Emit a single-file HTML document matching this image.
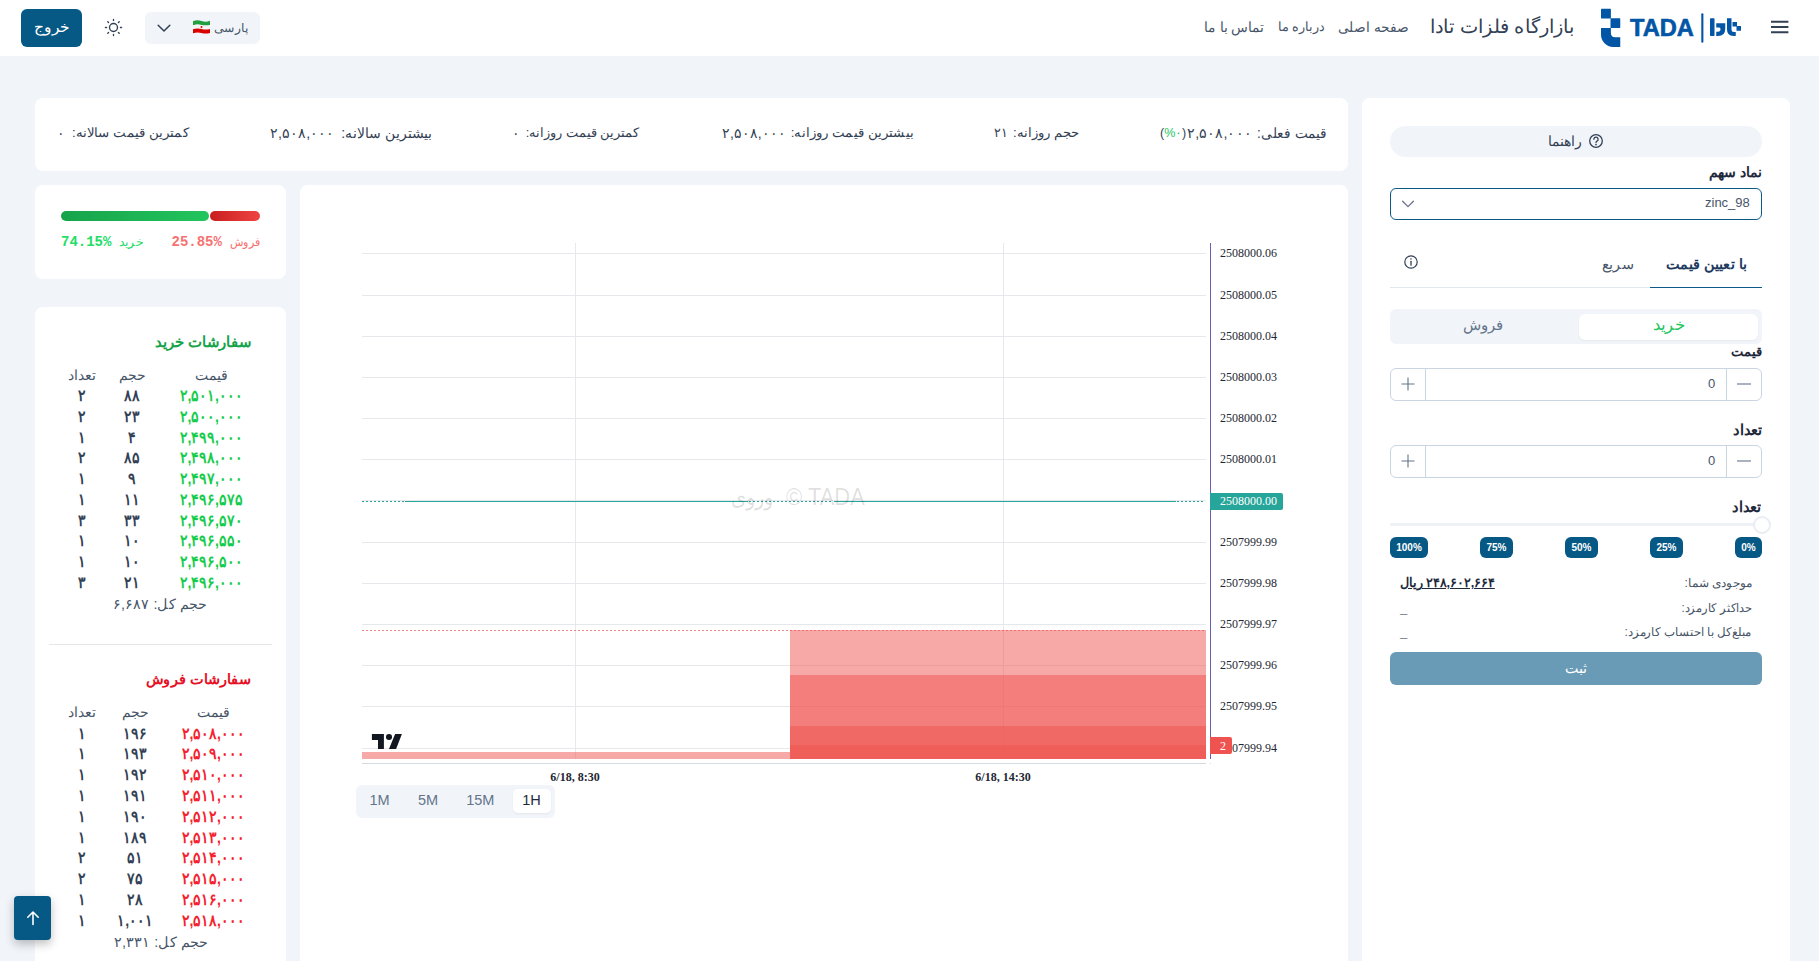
<!DOCTYPE html>
<html lang="fa">
<head>
<meta charset="utf-8">
<title>بازارگاه فلزات تادا</title>
<style>
*{box-sizing:border-box;margin:0;padding:0}
html,body{width:1819px;height:961px;overflow:hidden}
body{position:relative;background:#f1f5f9;font-family:"Liberation Sans",sans-serif;color:#334155;font-size:14px;line-height:1}
.abs{position:absolute}
.t{position:absolute;white-space:nowrap;line-height:20px;height:20px;direction:rtl}
.r{text-align:right}
.c{text-align:center}
.card{position:absolute;background:#fff;border-radius:8px}
.b{font-weight:bold}
/* header */
#hdr{position:absolute;left:0;top:0;width:1819px;height:56px;background:#fff}
.nav{color:#475569;font-size:13.5px}
/* stats */
.st{font-size:14px;color:#334155;top:123px}
/* order book */
.ob{font-size:14px}
.ob .h{color:#475569}
.n{font-size:16px;transform:scaleX(.875)}
.g{color:#14cc4b}
.rd{color:#f5222d}
/* chart */
.ax{position:absolute;font-family:"Liberation Serif",serif;font-size:12px;color:#1f2733;line-height:14px;height:14px;white-space:nowrap}
.gl{position:absolute;background:#e6e8ec;height:1px;left:362px;width:844px}
.vl{position:absolute;background:#e6e8ec;width:1px;top:243px;height:516px}
</style>
</head>
<body>

<!-- ================= HEADER ================= -->
<div id="hdr">
  
  <!-- hamburger -->
  <svg class="abs" style="left:1768px;top:16px" width="24" height="24" viewBox="0 0 24 24"><path d="M3 5.8H20.4M3 11H20.4M3 16.2H20.4" stroke="#334155" stroke-width="1.9" fill="none"/></svg>
  <!-- logo -->
  <svg class="abs" style="left:1595px;top:4px" width="160" height="48" viewBox="0 0 160 48">
    <g fill="#0355a5">
      <rect x="6" y="4.8" width="9.9" height="9.7" rx="0.4"/>
      <rect x="15.5" y="14.25" width="9.75" height="9.75" rx="0.4"/>
      <path d="M6,24 H15.9 V29 Q15.9,33.25 20.2,33.25 H25.25 V43 H18 A12,12.5 0 0 1 6,30.5 Z"/>
      <text x="35.1" y="32" font-family="Liberation Sans, sans-serif" font-weight="bold" font-size="23" stroke="#0355a5" stroke-width="0.6" textLength="63.8" lengthAdjust="spacingAndGlyphs">TADA</text>
      <rect x="106.3" y="9.25" width="2.1" height="29.5" rx="1"/>
      <g transform="translate(95,0)">
        <rect x="20" y="14.25" width="4.5" height="17.75" rx="0.7"/>
        <path d="M26.25,19.25 H35.25 V24.5 Q35.25,32 28,32 H26.25 V27.75 H28 Q30.5,27.75 30.5,25 Q30.5,23.5 29.3,23.5 H26.25 Z"/>
        <path d="M37,14.25 H41.5 V25.5 Q41.5,28 44,28 H45.75 V32 H43.5 Q37,32 37,25.5 Z"/>
        <rect x="42.5" y="18" width="4.5" height="4.5"/>
        <rect x="46.5" y="22" width="4.5" height="4.75"/>
      </g>
    </g>
  </svg>
  <div class="t r" id="ttl" style="right:244.0px;top:14px;font-size:19px;line-height:26px;height:26px;color:#334155;transform:scaleX(1.021);transform-origin:right">بازارگاه فلزات تادا</div>
  <div class="t r nav" id="n1" style="right:410.0px;top:17px;font-size:14px;transform:scaleX(0.979);transform-origin:right">صفحه اصلی</div>
  <div class="t r nav" id="n2" style="right:494.0px;top:17px;font-size:13px;transform:scaleX(0.979);transform-origin:right">درباره ما</div>
  <div class="t r nav" id="n3" style="right:555.0px;top:17px;font-size:14px;transform:scaleX(0.983);transform-origin:right">تماس با ما</div>
  <!-- language -->
  <div class="abs" style="left:145px;top:12px;width:115px;height:32px;background:#f1f5f9;border-radius:6px"></div>
  <div class="t r" id="lang" style="left:214.0px;width:34px;top:18px;font-size:12px;color:#475569;transform:scaleX(1.030);transform-origin:right">پارسی</div>
  <svg class="abs" style="left:193px;top:20px" width="17" height="14" viewBox="0 0 17 14"><path d="M0,1.2 Q4,-0.6 8.5,1 T17,0.8 V5 Q12.5,6 8.5,5 T0,5.2 Z" fill="#239f40"/><path d="M0,5.2 Q4,4 8.5,5 T17,5 V9 Q12.5,10 8.5,9 T0,9.2 Z" fill="#f5f5f5"/><path d="M0,9.2 Q4,8 8.5,9 T17,9 V13 Q12.5,14.2 8.5,13 T0,13.2 Z" fill="#da0000"/><circle cx="8.5" cy="7" r="1" fill="#da0000"/></svg>
  <svg class="abs" style="left:156px;top:20px" width="16" height="16" viewBox="0 0 16 16"><path d="M2.2,5.2 L8,11 L13.8,5.2" stroke="#334155" stroke-width="1.5" fill="none" stroke-linecap="round" stroke-linejoin="round"/></svg>
  <!-- sun -->
  <svg class="abs" style="left:104px;top:18px" width="19" height="19" viewBox="0 0 21 21"><g stroke="#334155" stroke-width="1.5" fill="none" stroke-linecap="round"><circle cx="10.5" cy="10.5" r="4.4"/><path d="M10.5,1.6v1.2M10.5,18.2v1.2M1.6,10.5h1.2M18.2,10.5h1.2M4.2,4.2l.85,.85M15.95,15.95l.85,.85M4.2,16.8l.85,-.85M15.95,5.05l.85,-.85"/></g></svg>
  <!-- exit -->
  <div class="abs" style="left:21px;top:9px;width:61px;height:38px;background:#075985;border-radius:6px"></div>
  <div class="t c" id="exit" style="left:21.0px;width:61px;top:17px;font-size:15px;color:#fff;transform:scaleX(1.030);transform-origin:center">خروج</div>

</div>

<!-- ================= STATS CARD ================= -->
<div class="card" style="left:35px;top:98px;width:1313px;height:73px"></div>

<div class="t r st" id="s1l" style="right:492.2px;font-size:14px;transform:scaleX(0.971);transform-origin:right">قیمت فعلی:</div><div class="t st" id="s1v" style="left:1187.4px;font-size:14px;transform:scaleX(1.017);transform-origin:left">۲,۵۰۸,۰۰۰</div><div class="t st" id="s1p" style="left:1160.2px;font-size:13px;transform:scaleX(0.963);transform-origin:left">(<span style="color:#22c55e">%۰</span>)</div>
<div class="t r st" id="s2l" style="right:739.4px;font-size:13px;transform:scaleX(1.017);transform-origin:right">حجم روزانه:</div><div class="t st" id="s2v" style="left:994.0px;font-size:13px;transform:scaleX(0.967);transform-origin:left">۲۱</div>
<div class="t r st" id="s3l" style="right:905.2px;font-size:13px;transform:scaleX(1.027);transform-origin:right">بیشترین قیمت روزانه:</div><div class="t st" id="s3v" style="left:721.8px;font-size:14px;transform:scaleX(0.995);transform-origin:left">۲,۵۰۸,۰۰۰</div>
<div class="t r st" id="s4l" style="right:1180.6px;font-size:13px;transform:scaleX(0.994);transform-origin:right">کمترین قیمت روزانه:</div><div class="t st" id="s4v" style="left:511.5px">۰</div>
<div class="t r st" id="s5l" style="right:1387.6px;font-size:14px;transform:scaleX(0.997);transform-origin:right">بیشترین سالانه:</div><div class="t st" id="s5v" style="left:270.2px;font-size:14px;transform:scaleX(1.012);transform-origin:left">۲,۵۰۸,۰۰۰</div>
<div class="t r st" id="s6l" style="right:1630.6px;font-size:13px;transform:scaleX(1.027);transform-origin:right">کمترین قیمت سالانه:</div><div class="t st" id="s6v" style="left:57.2px">۰</div>

<!-- ================= RIGHT PANEL ================= -->
<div class="card" style="left:1362px;top:98px;width:428px;height:900px"></div>

<!-- help pill -->
<div class="abs" style="left:1390px;top:126px;width:372px;height:31px;background:#f1f5f9;border-radius:16px"></div>
<svg class="abs" style="left:1588px;top:133px" width="16" height="16" viewBox="0 0 16 16"><circle cx="8" cy="8" r="6.3" stroke="#334155" stroke-width="1.3" fill="none"/><path d="M5.9,6.3a2.1,2.1 0 1 1 3,1.9c-.6,.35-.9,.7-.9,1.4" stroke="#334155" stroke-width="1.3" fill="none" stroke-linecap="round"/><circle cx="8" cy="11.6" r=".85" fill="#334155"/></svg>
<div class="t r" id="help" style="right:237.0px;top:131px;font-size:14px;color:#334155;transform:scaleX(1.000);transform-origin:right">راهنما</div>
<!-- symbol -->
<div class="t r b" id="l1" style="right:57.0px;top:162px;font-size:14px;color:#1e293b;transform:scaleX(1.000);transform-origin:right">نماد سهم</div>
<div class="abs" style="left:1390px;top:188px;width:372px;height:32px;border:1.5px solid #0b5a87;border-radius:6px;background:#fff"></div>
<div class="t" id="sym" style="direction:ltr;left:1705px;top:193px;font-size:13px;color:#475569">zinc_98</div>
<svg class="abs" style="left:1400px;top:196px" width="16" height="16" viewBox="0 0 16 16"><path d="M2.6,5.3 L8,10.6 L13.4,5.3" stroke="#64748b" stroke-width="1.3" fill="none" stroke-linecap="round" stroke-linejoin="round"/></svg>
<!-- tabs -->
<div class="abs" style="left:1390px;top:287px;width:372px;height:1px;background:#e2e8f0"></div>
<div class="abs" style="left:1650px;top:286.5px;width:112px;height:1.6px;background:#0b5a87"></div>
<div class="t r b" id="tab1" style="right:72.5px;top:254px;font-size:14px;color:#1e3a5f;transform:scaleX(1.024);transform-origin:right">با تعیین قیمت</div>
<div class="t r" id="tab2" style="right:185.0px;top:254px;font-size:14px;color:#475569;transform:scaleX(1.033);transform-origin:right">سریع</div>
<svg class="abs" style="left:1403px;top:254px" width="16" height="16" viewBox="0 0 16 16"><circle cx="8" cy="8" r="6.2" stroke="#334155" stroke-width="1.2" fill="none"/><path d="M8,7.3V11.2" stroke="#334155" stroke-width="1.3" stroke-linecap="round"/><circle cx="8" cy="5" r=".8" fill="#334155"/></svg>
<!-- buy/sell toggle -->
<div class="abs" style="left:1390px;top:309px;width:372px;height:35px;background:#f1f5f9;border-radius:6px"></div>
<div class="abs" style="left:1579px;top:314px;width:179px;height:26px;background:#fff;border-radius:6px;box-shadow:0 1px 2px rgba(0,0,0,.05)"></div>
<div class="t c" id="buy" style="left:1638.7px;width:60px;top:315px;font-size:16px;color:#22c55e;transform:scaleX(1.047);transform-origin:center">خرید</div>
<div class="t c" id="sell" style="left:1452.5px;width:60px;top:315px;font-size:15px;color:#64748b;transform:scaleX(0.998);transform-origin:center">فروش</div>
<!-- price -->
<div class="t r b" id="l2" style="right:57.0px;top:342px;font-size:13px;color:#1e293b;transform:scaleX(1.000);transform-origin:right">قیمت</div>
<div class="abs" style="left:1390px;top:368px;width:372px;height:33px;border:1px solid #cbd5e1;border-radius:6px;background:#fff"></div>
<div class="abs" style="left:1425px;top:368px;width:1px;height:33px;background:#cbd5e1"></div><div class="abs" style="left:1726px;top:368px;width:1px;height:33px;background:#cbd5e1"></div>
<svg class="abs" style="left:1400px;top:376px" width="16" height="16" viewBox="0 0 16 16"><path d="M8,1.5V14.5M1.5,8H14.5" stroke="#64748b" stroke-width="1.1"/></svg>
<svg class="abs" style="left:1736px;top:376px" width="16" height="16" viewBox="0 0 16 16"><path d="M1,8H15" stroke="#64748b" stroke-width="1.1"/></svg>
<div class="t" style="direction:ltr;left:1708px;top:374px;font-size:13px;color:#475569">0</div>
<!-- qty -->
<div class="t r b" id="l3" style="right:57.0px;top:420px;font-size:15px;color:#1e293b;transform:scaleX(0.968);transform-origin:right">تعداد</div>
<div class="abs" style="left:1390px;top:445px;width:372px;height:33px;border:1px solid #cbd5e1;border-radius:6px;background:#fff"></div>
<div class="abs" style="left:1425px;top:445px;width:1px;height:33px;background:#cbd5e1"></div><div class="abs" style="left:1726px;top:445px;width:1px;height:33px;background:#cbd5e1"></div>
<svg class="abs" style="left:1400px;top:453px" width="16" height="16" viewBox="0 0 16 16"><path d="M8,1.5V14.5M1.5,8H14.5" stroke="#64748b" stroke-width="1.1"/></svg>
<svg class="abs" style="left:1736px;top:453px" width="16" height="16" viewBox="0 0 16 16"><path d="M1,8H15" stroke="#64748b" stroke-width="1.1"/></svg>
<div class="t" style="direction:ltr;left:1708px;top:451px;font-size:13px;color:#475569">0</div>
<!-- slider -->
<div class="t r b" id="l4" style="right:58.0px;top:497px;font-size:15px;color:#1e293b;transform:scaleX(0.968);transform-origin:right">تعداد</div>
<div class="abs" style="left:1390px;top:523px;width:372px;height:3px;border-radius:2px;background:#eef1f5"></div>
<div class="abs" style="left:1753px;top:515.5px;width:18px;height:18px;border-radius:50%;background:#fff;border:2px solid #e9edf3"></div>
<div class="abs" style="left:1735px;top:537px;width:27px;height:21px;background:#075985;border-radius:6px"></div><div class="t c b" style="direction:ltr;left:1735px;width:27px;top:537.5px;font-size:10px;color:#fff">0%</div>
<div class="abs" style="left:1650px;top:537px;width:33px;height:21px;background:#075985;border-radius:6px"></div><div class="t c b" style="direction:ltr;left:1650px;width:33px;top:537.5px;font-size:10px;color:#fff">25%</div>
<div class="abs" style="left:1565px;top:537px;width:33px;height:21px;background:#075985;border-radius:6px"></div><div class="t c b" style="direction:ltr;left:1565px;width:33px;top:537.5px;font-size:10px;color:#fff">50%</div>
<div class="abs" style="left:1480px;top:537px;width:33px;height:21px;background:#075985;border-radius:6px"></div><div class="t c b" style="direction:ltr;left:1480px;width:33px;top:537.5px;font-size:10px;color:#fff">75%</div>
<div class="abs" style="left:1390px;top:537px;width:38px;height:21px;background:#075985;border-radius:6px"></div><div class="t c b" style="direction:ltr;left:1390px;width:38px;top:537.5px;font-size:10px;color:#fff">100%</div>

<div class="t r" id="i1" style="right:67.5px;top:573px;font-size:12px;color:#475569;transform:scaleX(1.008);transform-origin:right">موجودی شما:</div>
<div class="t b" id="i1v" style="left:1400.0px;top:573px;font-size:13px;color:#1e293b;text-decoration:underline;transform:scaleX(0.979);transform-origin:left">۲۴۸,۶۰۲,۶۶۴ ریال</div>
<div class="t r" id="i2" style="right:67.5px;top:598px;font-size:12px;color:#475569;transform:scaleX(0.952);transform-origin:right">حداکثر کارمزد:</div>
<div class="t b" style="direction:ltr;left:1400px;top:599px;font-size:13px;color:#1e293b">_</div>
<div class="t r" id="i3" style="right:67.5px;top:622px;font-size:12px;color:#475569;transform:scaleX(0.981);transform-origin:right">مبلغ‌کل با احتساب کارمزد:</div>
<div class="t b" style="direction:ltr;left:1400px;top:623px;font-size:13px;color:#1e293b">_</div>
<div class="abs" style="left:1390px;top:652px;width:372px;height:33px;background:#6a9bb6;border-radius:6px"></div>
<div class="t c" id="sub" style="left:1546.2px;width:60px;top:658px;font-size:14px;color:#fff;transform:scaleX(1.018);transform-origin:center">ثبت</div>


<!-- ================= RATIO CARD ================= -->
<div class="card" style="left:35px;top:185px;width:251px;height:94px"></div>

<div class="abs" style="left:61px;top:211px;width:148px;height:10px;border-radius:5px;background:linear-gradient(90deg,#16a34a,#22c55e)"></div>
<div class="abs" style="left:209.5px;top:211px;width:50.5px;height:10px;border-radius:5px;background:linear-gradient(90deg,#c81e1e,#ef4444)"></div>
<div class="t" id="r1" style="left:61px;top:232px;direction:ltr;font-family:'Liberation Mono',monospace;font-weight:bold;font-size:14px;color:#22dd66">74.15%</div>
<div class="t" id="r2" style="left:119.0px;top:232px;font-size:12px;color:#22dd66;transform:scaleX(1.043);transform-origin:left">خرید</div>
<div class="t" id="r3" style="left:171.5px;top:232px;direction:ltr;font-family:'Liberation Mono',monospace;font-weight:bold;font-size:14px;color:#f87171">25.85%</div>
<div class="t r" id="r4" style="right:1558.0px;top:232px;font-size:12px;color:#f87171;transform:scaleX(0.924);transform-origin:right">فروش</div>


<!-- ================= CHART CARD ================= -->
<div class="card" style="left:300px;top:185px;width:1048px;height:820px"></div>

<div class="gl" style="top:253px"></div><div class="gl" style="top:295px"></div><div class="gl" style="top:336px"></div><div class="gl" style="top:377px"></div><div class="gl" style="top:418px"></div><div class="gl" style="top:459px"></div><div class="gl" style="top:500px"></div><div class="gl" style="top:542px"></div><div class="gl" style="top:583px"></div><div class="gl" style="top:624px"></div><div class="gl" style="top:665px"></div><div class="gl" style="top:706px"></div><div class="gl" style="top:748px"></div>
<div class="vl" style="left:575px"></div><div class="vl" style="left:1003px"></div>
<div class="abs" style="left:362px;top:763px;width:844px;height:1px;background:#d5d9e0"></div><div class="abs" style="left:1210px;top:763px;width:1px;height:1px;background:#d5d9e0"></div>
<div class="abs" style="left:789.7px;top:630.4px;width:416.3px;height:128.4px;background:rgba(239,83,80,.5)"></div><div class="abs" style="left:789.7px;top:674.6px;width:416.3px;height:84.2px;background:rgba(239,83,80,.5)"></div><div class="abs" style="left:789.7px;top:725.5px;width:416.3px;height:33.3px;background:rgba(239,83,80,.5)"></div><div class="abs" style="left:789.7px;top:744.5px;width:416.3px;height:14.3px;background:rgba(239,83,80,.5)"></div>
<div class="abs" style="left:362px;top:752px;width:427.7px;height:6.8px;background:rgba(239,83,80,.5)"></div>
<div class="abs" style="left:362px;top:630px;width:844px;height:1px;background:repeating-linear-gradient(90deg,rgba(239,83,80,.7) 0 2px,transparent 2px 4px)"></div>
<div class="abs" style="left:362px;top:501px;width:43px;height:1px;background:repeating-linear-gradient(90deg,#26a69a 0 2px,transparent 2px 4px)"></div><div class="abs" style="left:1177px;top:501px;width:28px;height:1px;background:repeating-linear-gradient(90deg,#26a69a 0 2px,transparent 2px 4px)"></div>
<div class="abs" style="left:405px;top:501px;width:343px;height:1px;background:#26a69a"></div><div class="abs" style="left:749px;top:501px;width:84px;height:1px;background:repeating-linear-gradient(90deg,#26a69a 0 2px,transparent 2px 4px)"></div><div class="abs" style="left:834px;top:501px;width:342px;height:1px;background:#26a69a"></div>
<div class="t" id="wm1" style="direction:ltr;left:731.0px;top:483px;height:28px;line-height:28px;font-size:23px;color:rgba(0,0,0,.13);transform:scaleX(0.837);transform-origin:left">وروی</div><div class="t" id="wm2" style="direction:ltr;left:786.0px;top:483px;height:28px;line-height:28px;font-size:23px;color:rgba(0,0,0,.13);transform:scaleX(0.955);transform-origin:left">© TADA</div>
<div class="abs" style="left:1210px;top:243px;width:1px;height:516px;background:#6a60ad"></div>
<div class="ax" style="left:1220px;top:245.5px">2508000.06</div><div class="ax" style="left:1220px;top:287.5px">2508000.05</div><div class="ax" style="left:1220px;top:328.5px">2508000.04</div><div class="ax" style="left:1220px;top:369.5px">2508000.03</div><div class="ax" style="left:1220px;top:410.5px">2508000.02</div><div class="ax" style="left:1220px;top:451.5px">2508000.01</div><div class="ax" style="left:1220px;top:493.5px">2508000.00</div><div class="ax" style="left:1220px;top:534.5px">2507999.99</div><div class="ax" style="left:1220px;top:575.5px">2507999.98</div><div class="ax" style="left:1220px;top:616.5px">2507999.97</div><div class="ax" style="left:1220px;top:657.5px">2507999.96</div><div class="ax" style="left:1220px;top:698.5px">2507999.95</div><div class="ax" style="left:1220px;top:740.5px">2507999.94</div>
<div class="abs" style="left:1210px;top:493px;width:73px;height:17px;background:#26a69a;border-radius:0 2px 2px 0"></div><div class="ax" style="left:1220px;top:494px;color:#fff">2508000.00</div>
<div class="abs" style="left:1210px;top:737px;width:22px;height:16.5px;background:#ef5350;border-radius:0 2px 2px 0"></div><div class="ax" style="left:1220px;top:739px;color:#fff">2</div>
<div class="ax b c" style="left:525px;width:100px;top:770px;font-size:12px">6/18, 8:30</div><div class="ax b c" style="left:953px;width:100px;top:770px;font-size:12px">6/18, 14:30</div>
<svg class="abs" style="left:371px;top:733px" width="32" height="17" viewBox="0 0 32 17"><path d="M0.9,0.9H12.9V15.9H7V7H0.9Z M24.1,0.9H30.9L25.1,15.9H18Z" fill="#131722"/><circle cx="18" cy="3.95" r="3.05" fill="#131722"/></svg>
<div class="abs" style="left:356px;top:785px;width:199px;height:33px;background:#f1f5f9;border-radius:6px"></div>
<div class="abs" style="left:513px;top:789px;width:38px;height:24px;background:#fff;border-radius:5px;box-shadow:0 1px 2px rgba(0,0,0,.06)"></div>
<div class="t c" style="direction:ltr;left:354.5px;width:50px;top:790px;font-size:14.5px;color:#64748b">1M</div><div class="t c" style="direction:ltr;left:403px;width:50px;top:790px;font-size:14.5px;color:#64748b">5M</div><div class="t c" style="direction:ltr;left:455.3px;width:50px;top:790px;font-size:14.5px;color:#64748b">15M</div><div class="t c" style="direction:ltr;left:506.5px;width:50px;top:790px;font-size:14.5px;color:#1e293b">1H</div>


<!-- ================= ORDER BOOK ================= -->
<div class="card" style="left:35px;top:307px;width:251px;height:700px"></div>
<div class="ob">
<div class="t r b" id="bt" style="right:1567.0px;top:332px;font-size:15px;color:#16a34a;transform:scaleX(0.990);transform-origin:right">سفارشات خرید</div>
<div class="t c h" style="left:181px;width:60px;top:365px">قیمت</div><div class="t c h" style="left:102px;width:60px;top:365px">حجم</div><div class="t c h" style="left:52px;width:60px;top:365px">تعداد</div>
<div class="t c b n g" style="left:166px;width:90px;top:386.2px">۲,۵۰۱,۰۰۰</div><div class="t c b n" style="left:102px;width:60px;top:386.2px">۸۸</div><div class="t c b n" style="left:52px;width:60px;top:386.2px">۲</div>
<div class="t c b n g" style="left:166px;width:90px;top:406.95px">۲,۵۰۰,۰۰۰</div><div class="t c b n" style="left:102px;width:60px;top:406.95px">۲۳</div><div class="t c b n" style="left:52px;width:60px;top:406.95px">۲</div>
<div class="t c b n g" style="left:166px;width:90px;top:427.7px">۲,۴۹۹,۰۰۰</div><div class="t c b n" style="left:102px;width:60px;top:427.7px">۴</div><div class="t c b n" style="left:52px;width:60px;top:427.7px">۱</div>
<div class="t c b n g" style="left:166px;width:90px;top:448.45px">۲,۴۹۸,۰۰۰</div><div class="t c b n" style="left:102px;width:60px;top:448.45px">۸۵</div><div class="t c b n" style="left:52px;width:60px;top:448.45px">۲</div>
<div class="t c b n g" style="left:166px;width:90px;top:469.2px">۲,۴۹۷,۰۰۰</div><div class="t c b n" style="left:102px;width:60px;top:469.2px">۹</div><div class="t c b n" style="left:52px;width:60px;top:469.2px">۱</div>
<div class="t c b n g" style="left:166px;width:90px;top:489.95px">۲,۴۹۶,۵۷۵</div><div class="t c b n" style="left:102px;width:60px;top:489.95px">۱۱</div><div class="t c b n" style="left:52px;width:60px;top:489.95px">۱</div>
<div class="t c b n g" style="left:166px;width:90px;top:510.7px">۲,۴۹۶,۵۷۰</div><div class="t c b n" style="left:102px;width:60px;top:510.7px">۳۳</div><div class="t c b n" style="left:52px;width:60px;top:510.7px">۳</div>
<div class="t c b n g" style="left:166px;width:90px;top:531.45px">۲,۴۹۶,۵۵۰</div><div class="t c b n" style="left:102px;width:60px;top:531.45px">۱۰</div><div class="t c b n" style="left:52px;width:60px;top:531.45px">۱</div>
<div class="t c b n g" style="left:166px;width:90px;top:552.2px">۲,۴۹۶,۵۰۰</div><div class="t c b n" style="left:102px;width:60px;top:552.2px">۱۰</div><div class="t c b n" style="left:52px;width:60px;top:552.2px">۱</div>
<div class="t c b n g" style="left:166px;width:90px;top:572.95px">۲,۴۹۶,۰۰۰</div><div class="t c b n" style="left:102px;width:60px;top:572.95px">۲۱</div><div class="t c b n" style="left:52px;width:60px;top:572.95px">۳</div>
<div class="t c h" id="tot1" style="left:100.3px;width:120px;top:594px;font-size:14px;transform:scaleX(1.016);transform-origin:center">حجم کل: ۶,۶۸۷</div>
<div class="abs" style="left:49px;top:644px;width:223px;height:1px;background:#e5e7eb"></div>
<div class="t r b" id="st" style="right:1568.4px;top:669px;font-size:14px;color:#e60f24;transform:scaleX(1.030);transform-origin:right">سفارشات فروش</div>
<div class="t c h" style="left:183px;width:60px;top:702px">قیمت</div><div class="t c h" style="left:105px;width:60px;top:702px">حجم</div><div class="t c h" style="left:52px;width:60px;top:702px">تعداد</div>
<div class="t c b n rd" style="left:168px;width:90px;top:723.6px">۲,۵۰۸,۰۰۰</div><div class="t c b n" style="left:105px;width:60px;top:723.6px">۱۹۶</div><div class="t c b n" style="left:52.400000000000006px;width:60px;top:723.6px">۱</div>
<div class="t c b n rd" style="left:168px;width:90px;top:744.4px">۲,۵۰۹,۰۰۰</div><div class="t c b n" style="left:105px;width:60px;top:744.4px">۱۹۳</div><div class="t c b n" style="left:52.400000000000006px;width:60px;top:744.4px">۱</div>
<div class="t c b n rd" style="left:168px;width:90px;top:765.2px">۲,۵۱۰,۰۰۰</div><div class="t c b n" style="left:105px;width:60px;top:765.2px">۱۹۲</div><div class="t c b n" style="left:52.400000000000006px;width:60px;top:765.2px">۱</div>
<div class="t c b n rd" style="left:168px;width:90px;top:786px">۲,۵۱۱,۰۰۰</div><div class="t c b n" style="left:105px;width:60px;top:786px">۱۹۱</div><div class="t c b n" style="left:52.400000000000006px;width:60px;top:786px">۱</div>
<div class="t c b n rd" style="left:168px;width:90px;top:806.8px">۲,۵۱۲,۰۰۰</div><div class="t c b n" style="left:105px;width:60px;top:806.8px">۱۹۰</div><div class="t c b n" style="left:52.400000000000006px;width:60px;top:806.8px">۱</div>
<div class="t c b n rd" style="left:168px;width:90px;top:827.6px">۲,۵۱۳,۰۰۰</div><div class="t c b n" style="left:105px;width:60px;top:827.6px">۱۸۹</div><div class="t c b n" style="left:52.400000000000006px;width:60px;top:827.6px">۱</div>
<div class="t c b n rd" style="left:168px;width:90px;top:848.4px">۲,۵۱۴,۰۰۰</div><div class="t c b n" style="left:105px;width:60px;top:848.4px">۵۱</div><div class="t c b n" style="left:52.400000000000006px;width:60px;top:848.4px">۲</div>
<div class="t c b n rd" style="left:168px;width:90px;top:869.2px">۲,۵۱۵,۰۰۰</div><div class="t c b n" style="left:105px;width:60px;top:869.2px">۷۵</div><div class="t c b n" style="left:52.400000000000006px;width:60px;top:869.2px">۲</div>
<div class="t c b n rd" style="left:168px;width:90px;top:890px">۲,۵۱۶,۰۰۰</div><div class="t c b n" style="left:105px;width:60px;top:890px">۲۸</div><div class="t c b n" style="left:52.400000000000006px;width:60px;top:890px">۱</div>
<div class="t c b n rd" style="left:168px;width:90px;top:910.8px">۲,۵۱۸,۰۰۰</div><div class="t c b n" style="left:105px;width:60px;top:910.8px">۱,۰۰۱</div><div class="t c b n" style="left:52.400000000000006px;width:60px;top:910.8px">۱</div>
<div class="t c h" id="tot2" style="left:101.0px;width:120px;top:932px;font-size:14px;transform:scaleX(1.022);transform-origin:center">حجم کل: ۲,۳۳۱</div>
</div>


<div class="abs" style="left:14px;top:896px;width:37px;height:44px;background:#075985;border-radius:4px;box-shadow:0 4px 10px rgba(0,0,0,.25)"></div>
<svg class="abs" style="left:23.5px;top:909px" width="18" height="18" viewBox="0 0 18 18"><path d="M9,15.5V3M3.8,8.2L9,3L14.2,8.2" stroke="#fff" stroke-width="1.6" fill="none" stroke-linecap="round" stroke-linejoin="round"/></svg>

</body>
</html>
